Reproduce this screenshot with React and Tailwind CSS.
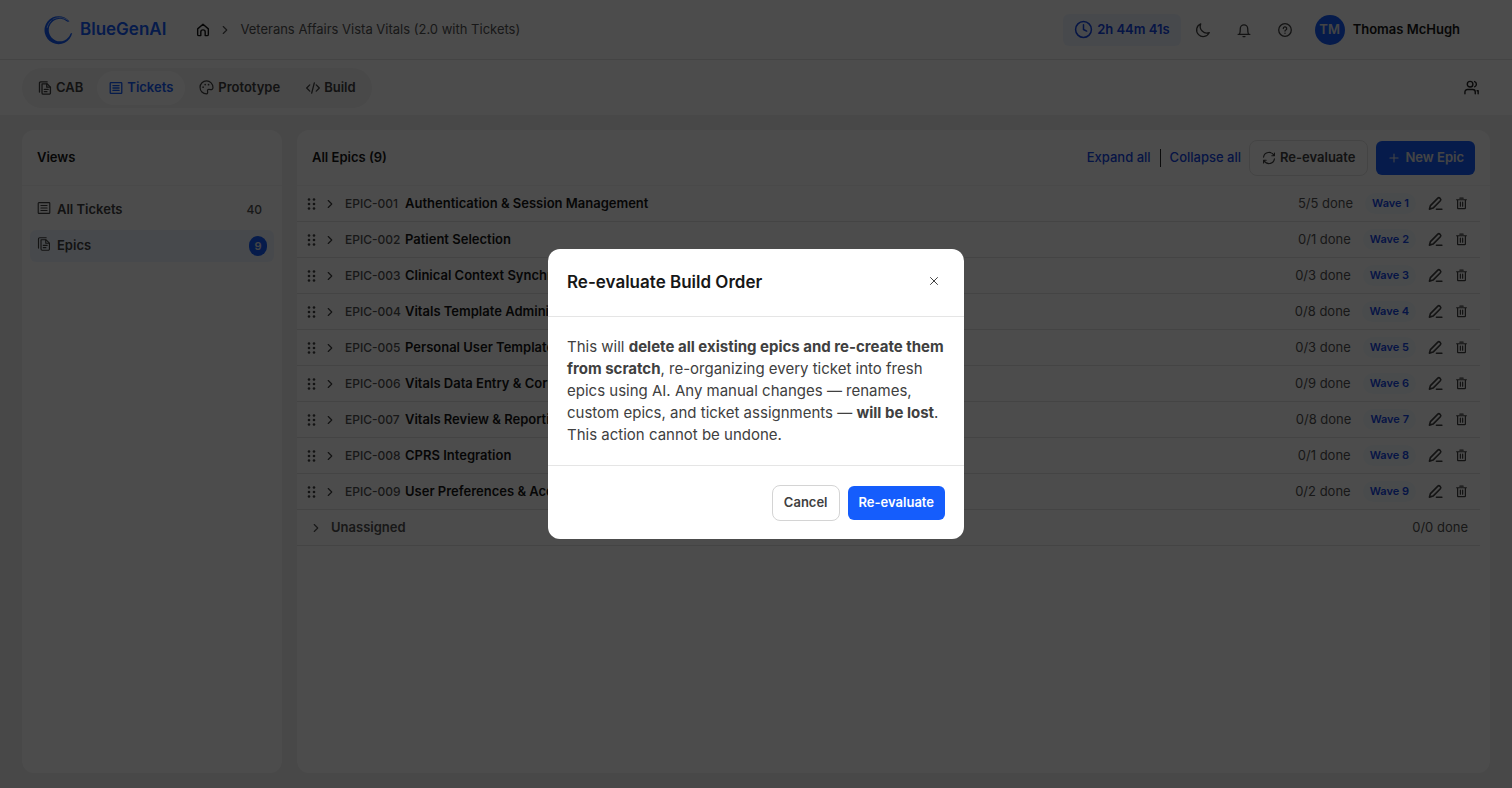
import { useState } from "react";
import { X, ChevronRight, Clock, Plus } from "lucide-react";

const EPICS = [
  { id: "EPIC-001", title: "Authentication & Session Management", done: "5/5", wave: 1 },
  { id: "EPIC-002", title: "Patient Selection", done: "0/1", wave: 2 },
  { id: "EPIC-003", title: "Clinical Context Synchronization", done: "0/3", wave: 3 },
  { id: "EPIC-004", title: "Vitals Template Administration", done: "0/8", wave: 4 },
  { id: "EPIC-005", title: "Personal User Templates", done: "0/3", wave: 5 },
  { id: "EPIC-006", title: "Vitals Data Entry & Correction", done: "0/9", wave: 6 },
  { id: "EPIC-007", title: "Vitals Review & Reporting", done: "0/8", wave: 7 },
  { id: "EPIC-008", title: "CPRS Integration", done: "0/1", wave: 8 },
  { id: "EPIC-009", title: "User Preferences & Accessibility", done: "0/2", wave: 9 },
];

const Icon = ({ size = 16, width = 1.3, children }) => (
  <svg
    width={size}
    height={size}
    viewBox="0 0 16 16"
    fill="none"
    stroke="currentColor"
    strokeWidth={width}
    strokeLinecap="round"
    strokeLinejoin="round"
    className="shrink-0"
    aria-hidden="true"
  >
    {children}
  </svg>
);

const PagesIcon = (props) => (
  <Icon {...props}>
    <path d="M4.600 3.200h5.800l3.800 3.800v6.700a1.400 1.400 0 0 1-1.400 1.400H6A1.400 1.400 0 0 1 4.600 13.700Z" />
    <path d="M10 3.400v3.700h3.900M7.200 9.600h4.400M7.200 12.200h3" />
    <path d="M1.700 12.700V2.200A1.300 1.300 0 0 1 3 .9h7.500" />
  </Icon>
);

const ListIcon = (props) => (
  <Icon {...props}>
    <rect x="1.400" y="1.800" width="13.200" height="12.400" rx="0.800" />
    <path d="M4.500 5.200h7M4.500 8h7M4.500 10.800h7" />
  </Icon>
);

const HomeIcon = (props) => (
  <Icon {...props}>
    <path d="M1.900 6.700 8 1.500l6.100 5.200v6.300a1.400 1.400 0 0 1-1.400 1.400h-2.200V10.300a2.500 2.500 0 0 0-5 0v4.100H3.300A1.400 1.400 0 0 1 1.900 13Z" />
  </Icon>
);

const MoonIcon = (props) => (
  <Icon {...props}>
    <path d="M5.700 1.900a6.600 6.600 0 1 0 8.600 8.700A6.700 6.700 0 0 1 5.700 1.900Z" />
  </Icon>
);

const BellIcon = (props) => (
  <Icon {...props}>
    <path d="M2.100 12.300h11.800M3.500 12.300c.7-1.300.8-2.700.8-5.700a3.700 3.700 0 0 1 7.400 0c0 3 .1 4.400.8 5.700M7 14.600h2" />
  </Icon>
);

const HelpIcon = (props) => (
  <Icon {...props}>
    <circle cx="8" cy="8" r="6.300" />
    <path d="M6.300 6.500a1.700 1.700 0 1 1 2.500 1.500c-.6.300-.8.600-.8 1.100M8 11.200v.1" />
  </Icon>
);

const PaletteIcon = (props) => (
  <Icon {...props}>
    <path d="M8 14.800A6.900 6.900 0 1 1 14.900 8c0 1.600-1.200 2.400-2.600 2.200l-1.600-.2c-1.300-.1-1.900.8-1.600 1.900.4 1.500.1 2.900-1.100 2.900Z" />
    <path d="M4.400 7.600v.1M6.600 4.800v.1M10.200 4.900v.1" strokeWidth="1.800" />
  </Icon>
);

const CodeIcon = (props) => (
  <Icon {...props}>
    <path d="M4.300 4.400.8 8l3.500 3.600M11.700 4.400 15.200 8l-3.500 3.600M9.500 2.200 6.500 13.800" />
  </Icon>
);

const UsersIcon = (props) => (
  <Icon {...props}>
    <circle cx="6.500" cy="4.500" r="3" />
    <path d="M1 14.600v-1.800a2.600 2.600 0 0 1 2.600-2.600h5.800a2.600 2.600 0 0 1 2.600 2.600v1.800M11.300 1.700a3 3 0 0 1 0 5.600M14 11.400h1.100v3.200" />
  </Icon>
);

const RefreshIcon = (props) => (
  <Icon {...props}>
    <path d="M1.800 7A6.300 6.300 0 0 1 13.700 5.200M14.200 9A6.300 6.300 0 0 1 2.300 10.800M14.200 2.400v3h-3M1.800 13.600v-3h3" />
  </Icon>
);

const PenIcon = (props) => (
  <Icon {...props}>
    <path d="M1.500 14 2.600 10.200l7.900-7.900a1.500 1.500 0 0 1 2.100 0l.6.600a1.500 1.500 0 0 1 0 2.100L5.400 12.900ZM9 14.200h5.800" />
  </Icon>
);

const TrashIcon = (props) => (
  <Icon {...props}>
    <path d="M2 3.400h12M6 1.400h4M3.200 3.600v9.800a1 1 0 0 0 1 1h7.600a1 1 0 0 0 1-1V3.600M6.600 6.400v5M9.400 6.400v5" />
  </Icon>
);

const GripIcon = () => (
  <svg width="10" height="14" viewBox="0 0 10 14" fill="currentColor" className="shrink-0" aria-hidden="true">
    {[2.5, 7, 11.5].map((y) => (
      <g key={y}>
        <circle cx="2" cy={y} r="1.300" />
        <circle cx="7" cy={y} r="1.300" />
      </g>
    ))}
  </svg>
);

const Logo = () => (
  <svg width="30" height="30" viewBox="0 0 30 30" fill="none" className="shrink-0" aria-hidden="true">
    <path
      fill="currentColor"
      d="M28.200 18A14 14 0 1 1 25.500 6.500L23.400 6.700A11.200 11.200 0 1 0 26.600 18.600Z"
    />
    <path stroke="white" strokeWidth="0.600" strokeLinecap="round" d="M9 4.200c4.500-2.400 10-2.200 14.500.8M3.200 12.500c.6-2.800 2-5 4-6.800" />
  </svg>
);

const Header = () => (
  <header className="flex h-[60px] items-center border-b border-neutral-200 bg-white pr-[52px] pl-11 text-[13px]">
    <a href="#" className="flex items-center gap-[6px] text-[17px] font-semibold text-blue-600">
      <Logo />
      BlueGenAI
    </a>
    <nav className="ml-[30px] flex items-center gap-2 text-neutral-600" aria-label="Breadcrumb">
      <a href="#" aria-label="Home" className="text-neutral-900">
        <HomeIcon size={14} width={1.6} />
      </a>
      <ChevronRight size={14} />
      <span>Veterans Affairs Vista Vitals (2.0 with Tickets)</span>
    </nav>
    <div className="ml-auto flex items-center">
      <div className="flex h-8 items-center gap-1 rounded-md bg-blue-50 px-[11px] font-semibold text-blue-700">
        <Clock size={19} strokeWidth={1.9} />
        2h 44m 41s
      </div>
      <div className="ml-[14px] flex items-center gap-[25px] text-neutral-700">
        <button type="button" aria-label="Dark mode"><MoonIcon /></button>
        <button type="button" aria-label="Notifications"><BellIcon /></button>
        <button type="button" aria-label="Help"><HelpIcon /></button>
      </div>
      <button type="button" className="ml-[22px] flex items-center gap-2 font-semibold text-neutral-900">
        <span className="flex size-[30px] items-center justify-center rounded-full bg-blue-600 text-neutral-200">TM</span>
        Thomas McHugh
      </button>
    </div>
  </header>
);

const TabBar = () => (
  <div className="flex h-[55px] items-center justify-between bg-white pr-[33px] pl-[22px]">
    <nav className="flex items-center gap-[2px] rounded-full bg-neutral-100 px-1 py-[3px] text-[13px] font-semibold text-neutral-700">
      <a href="#" className="flex h-[34px] items-center gap-1 rounded-full px-3">
        <PagesIcon size={14} width={1.5} />
        CAB
      </a>
      <a href="#" className="flex h-[34px] items-center gap-1 rounded-full bg-white px-3 text-blue-600">
        <ListIcon size={14} width={1.5} />
        Tickets
      </a>
      <a href="#" className="flex h-[34px] items-center gap-1 rounded-full px-3">
        <PaletteIcon size={15} />
        Prototype
      </a>
      <a href="#" className="flex h-[34px] items-center gap-1 rounded-full px-3">
        <CodeIcon size={14} width={1.5} />
        Build
      </a>
    </nav>
    <button type="button" aria-label="Members" className="text-neutral-800">
      <UsersIcon size={15} width={1.5} />
    </button>
  </div>
);

const Sidebar = () => (
  <aside className="w-[260px] shrink-0 rounded-xl bg-white">
    <h2 className="flex h-14 items-center border-b border-neutral-100 px-[15px] text-[13px] font-semibold text-neutral-900">
      Views
    </h2>
    <div className="flex flex-col gap-1 p-2 text-[13px] font-semibold text-neutral-700">
      <a href="#" className="flex h-8 items-center gap-[6px] rounded-md px-[7px]">
        <span className="pb-1"><ListIcon size={14} /></span>
        All Tickets
        <span className="ml-auto px-[5px] text-xs font-medium text-neutral-600">40</span>
      </a>
      <a href="#" className="flex h-8 items-center gap-[6px] rounded-md bg-blue-50 px-[7px]">
        <span className="pb-1"><PagesIcon size={14} /></span>
        Epics
        <span className="ml-auto flex h-5 w-[18px] items-center justify-center rounded-full bg-blue-600 text-[11px] text-neutral-200">
          9
        </span>
      </a>
    </div>
  </aside>
);

const EpicRow = ({ epic }) => (
  <li className="flex h-9 items-center border-b border-neutral-200 pr-3 pl-[10px] text-[13px]">
    <span className="text-neutral-700"><GripIcon /></span>
    <button type="button" aria-label={`Expand ${epic.id}`} className="ml-[6px] text-neutral-700">
      <ChevronRight size={14} />
    </button>
    <span className="ml-2 w-[60px] text-xs font-medium text-neutral-600">{epic.id}</span>
    <span className="font-semibold text-neutral-900">{epic.title}</span>
    <span className="ml-auto text-neutral-600">{epic.done} done</span>
    <span className="ml-3 rounded-full bg-blue-50/60 px-[7px] py-[2px] text-[11px] font-semibold text-blue-700">
      Wave {epic.wave}
    </span>
    <button type="button" aria-label="Edit epic" className="ml-3 text-neutral-700">
      <PenIcon size={15} width={1.7} />
    </button>
    <button type="button" aria-label="Delete epic" className="ml-3 text-neutral-700">
      <TrashIcon size={13} width={1.5} />
    </button>
  </li>
);

const EpicsPanel = ({ onReevaluate }) => (
  <main className="min-w-0 flex-1 rounded-xl bg-white">
    <div className="flex h-14 items-center border-b border-neutral-100 px-[15px] text-[13px]">
      <h1 className="font-semibold text-neutral-900">All Epics (9)</h1>
      <div className="ml-auto flex items-center gap-2 font-medium">
        <button type="button" className="text-blue-700">Expand all</button>
        <span className="mx-px h-[18px] w-px bg-neutral-800" />
        <button type="button" className="text-blue-700">Collapse all</button>
        <button
          type="button"
          onClick={onReevaluate}
          className="flex h-9 items-center gap-1 rounded-lg border border-neutral-200 px-3 font-semibold text-neutral-700"
        >
          <RefreshIcon size={14} />
          Re-evaluate
        </button>
        <button
          type="button"
          className="flex h-[34px] items-center gap-1 rounded-md bg-blue-600 px-[11px] font-semibold text-neutral-200"
        >
          <Plus size={14} strokeWidth={1.8} />
          New Epic
        </button>
      </div>
    </div>
    <ul className="mr-[10px]">
      {EPICS.map((epic) => (
        <EpicRow key={epic.id} epic={epic} />
      ))}
      <li className="flex h-9 items-center border-b border-neutral-200 px-3 text-[13px] text-neutral-600">
        <ChevronRight size={14} />
        <span className="ml-2 font-semibold">Unassigned</span>
        <span className="ml-auto">0/0 done</span>
      </li>
    </ul>
  </main>
);

const ReevaluateDialog = ({ onClose }) => (
  <div className="fixed inset-0 z-10 flex items-center justify-center bg-black/70">
    <div role="dialog" aria-modal="true" aria-labelledby="dialog-title" className="w-[416px] rounded-xl bg-white">
      <div className="flex h-[68px] items-center justify-between border-b border-neutral-200 px-[19px]">
        <h2 id="dialog-title" className="text-[17px] font-semibold text-neutral-900">Re-evaluate Build Order</h2>
        <button type="button" aria-label="Close" onClick={onClose} className="mr-1 pb-1 text-neutral-700">
          <X size={14} strokeWidth={1.7} />
        </button>
      </div>
      <p className="border-b border-neutral-200 p-[19px] text-[15px] leading-[22px] text-neutral-700">
        This will <strong>delete all existing epics and re-create them from scratch</strong>, re-organizing every
        ticket into fresh epics using AI. Any manual changes — renames, custom epics, and ticket assignments —{" "}
        <strong>will be lost</strong>. This action cannot be undone.
      </p>
      <div className="flex items-center justify-end gap-2 px-[19px] pt-[19px] pb-[18px] text-[13px] font-semibold">
        <button type="button" onClick={onClose} className="h-9 rounded-lg border border-neutral-300 px-[11px] text-neutral-700">
          Cancel
        </button>
        <button type="button" onClick={onClose} className="h-[34px] rounded-md bg-blue-600 px-[11px] text-white">
          Re-evaluate
        </button>
      </div>
    </div>
  </div>
);

export default function App() {
  const [dialogOpen, setDialogOpen] = useState(true);

  return (
    <div className="flex min-h-screen flex-col bg-[#f2f2f2] font-[Inter,sans-serif]">
      <Header />
      <TabBar />
      <div className="flex flex-1 gap-[15px] px-[22px] py-[15px]">
        <Sidebar />
        <EpicsPanel onReevaluate={() => setDialogOpen(true)} />
      </div>
      {dialogOpen && <ReevaluateDialog onClose={() => setDialogOpen(false)} />}
    </div>
  );
}
